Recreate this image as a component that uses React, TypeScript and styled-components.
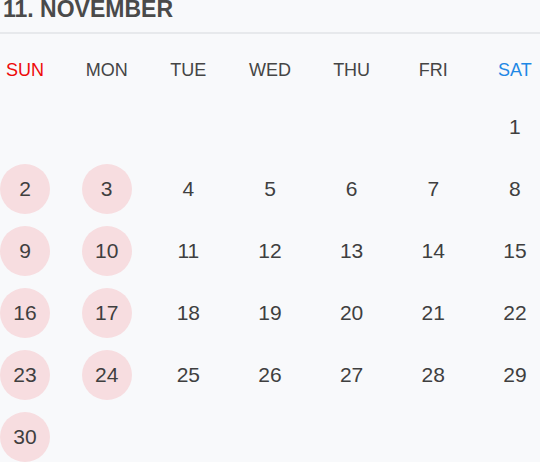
import styled, { createGlobalStyle } from "styled-components";

const GlobalStyle = createGlobalStyle`
  html, body {
    margin: 0;
    padding: 0;
    background: #f8f9fb;
    font-family: "Liberation Sans", Arial, sans-serif;
  }
`;

type Tone = "sun" | "sat" | "plain";

const Page = styled.div`
  width: 540px;
  height: 462px;
  overflow: hidden;
  background: #f8f9fb;
`;

const Title = styled.div`
  height: 32px;
  line-height: 19px;
  padding-left: 3px;
  font-size: 23px;
  font-weight: bold;
  color: #4a4a4a;
  border-bottom: 2px solid #e7e9ec;
`;

const Week = styled.div`
  display: grid;
  grid-template-columns: repeat(7, 50px);
  justify-content: space-between;
  margin-top: 11px;
`;

const WeekDay = styled.div<{ tone: Tone }>`
  height: 50px;
  display: flex;
  align-items: center;
  justify-content: center;
  font-size: 18px;
  color: ${(p) =>
    p.tone === "sun" ? "#ee0a0a" : p.tone === "sat" ? "#1e88e5" : "#454545"};
`;

const Days = styled.div`
  display: grid;
  grid-template-columns: repeat(7, 50px);
  justify-content: space-between;
  row-gap: 12px;
  margin-top: 7px;
`;

const Day = styled.div<{ marked: boolean }>`
  width: 50px;
  height: 50px;
  border-radius: 50%;
  display: flex;
  align-items: center;
  justify-content: center;
  font-size: 21px;
  color: #3f3f3f;
  background: ${(p) => (p.marked ? "#f7dde0" : "transparent")};
`;

const weekDays: { label: string; tone: Tone }[] = [
  { label: "SUN", tone: "sun" },
  { label: "MON", tone: "plain" },
  { label: "TUE", tone: "plain" },
  { label: "WED", tone: "plain" },
  { label: "THU", tone: "plain" },
  { label: "FRI", tone: "plain" },
  { label: "SAT", tone: "sat" },
];

// November starts on a Saturday
const offset = 6;
const cells: (number | null)[] = [
  ...Array.from({ length: offset }, () => null),
  ...Array.from({ length: 30 }, (_, i) => i + 1),
];

export default function App() {
  return (
    <Page>
      <GlobalStyle />
      <Title>11. NOVEMBER</Title>
      <Week>
        {weekDays.map((d) => (
          <WeekDay key={d.label} tone={d.tone}>
            {d.label}
          </WeekDay>
        ))}
      </Week>
      <Days>
        {cells.map((n, i) => {
          const col = i % 7;
          const marked = n !== null && n > 1 && (col === 0 || col === 1);
          return (
            <Day key={i} marked={marked}>
              {n}
            </Day>
          );
        })}
      </Days>
    </Page>
  );
}
